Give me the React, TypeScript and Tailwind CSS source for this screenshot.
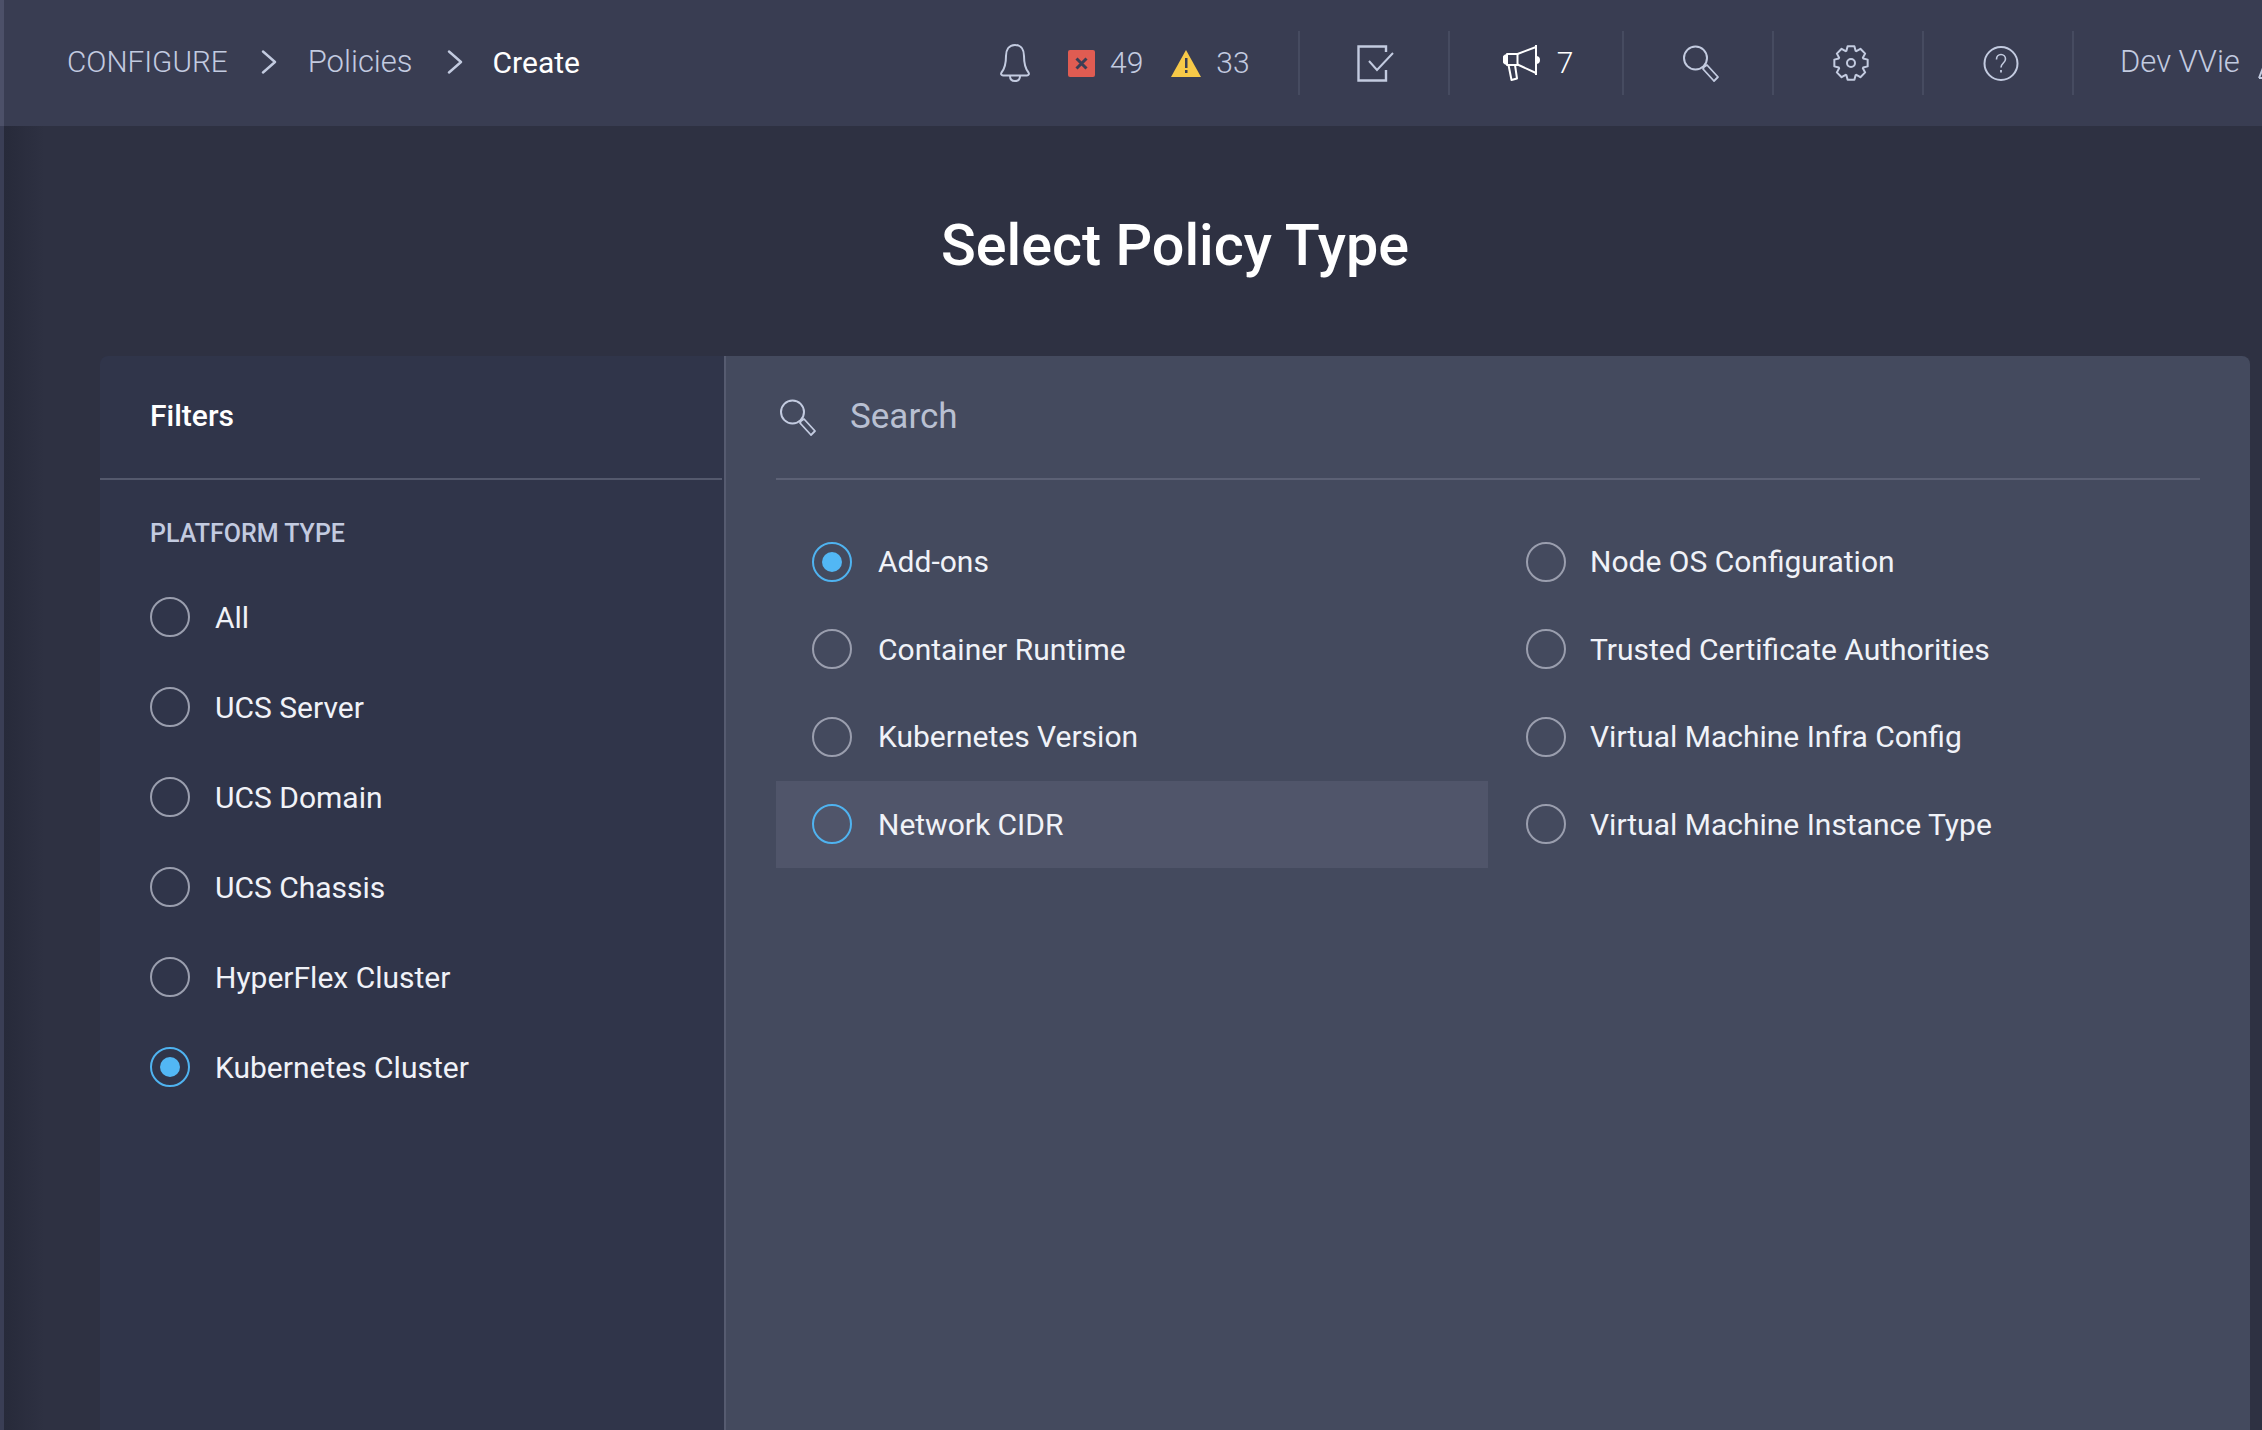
const platformTypes = ["All", "UCS Server", "UCS Domain", "UCS Chassis", "HyperFlex Cluster", "Kubernetes Cluster"];

const policyTypes = [
  "Add-ons",
  "Container Runtime",
  "Kubernetes Version",
  "Network CIDR",
  "Node OS Configuration",
  "Trusted Certificate Authorities",
  "Virtual Machine Infra Config",
  "Virtual Machine Instance Type",
];

const gearPath = (() => {
  const pts: string[] = [];
  for (let i = 0; i < 8; i++) {
    const a = (i * Math.PI) / 4 - Math.PI / 2;
    [
      [-0.36, 13],
      [-0.2, 17],
      [0.2, 17],
      [0.36, 13],
    ].forEach(([d, r]) => {
      pts.push(`${(18 + r * Math.cos(a + d)).toFixed(2)} ${(18 + r * Math.sin(a + d)).toFixed(2)}`);
    });
  }
  return `M${pts.join("L")}Z`;
})();

const Radio = ({ selected, active }: { selected?: boolean; active?: boolean }) => (
  <span
    className={`flex h-10 w-10 shrink-0 items-center justify-center rounded-full border-2 ${
      selected || active ? "border-[#4fb3f0]" : "border-[#9a9eae]"
    }`}
  >
    {selected && <span className="h-5 w-5 rounded-full bg-[#52b7f5]" />}
  </span>
);

const Chevron = () => (
  <svg width="16" height="24" viewBox="0 0 16 24" fill="none" stroke="#c3cbe0" strokeWidth="2.4" strokeLinecap="round" strokeLinejoin="round">
    <path d="M2 1.5 14 12 2 22.5" />
  </svg>
);

const SearchIcon = ({ color = "#c3cbe0" }: { color?: string }) => (
  <svg width="36" height="37" viewBox="0 0 36 37" fill="none" stroke={color} strokeWidth="2">
    <circle cx="12.5" cy="13" r="11.5" />
    <path d="M21 22 24 20 35 32 31 36 20 24Z" strokeWidth="1.8" strokeLinejoin="round" />
  </svg>
);

const HeaderCell = ({ width, children }: { width: string; children: React.ReactNode }) => (
  <div className={`flex h-16 shrink-0 items-center justify-center border-r-2 border-[#464b60] ${width}`}>{children}</div>
);

export default function App() {
  return (
    <div className="flex h-screen w-[2262px] flex-col overflow-hidden bg-[#2e3142] font-['Roboto',sans-serif]">
      <header className="flex h-[126px] shrink-0 items-center border-l-4 border-[#4c5068] bg-[#393d52] text-[30px]">
        <nav className="flex w-[996px] shrink-0 items-center pb-[2px] pl-[63px] font-light text-[#c3cbe0]">
          <span className="text-[29.700px]">CONFIGURE</span>
          <span className="ml-[33px] mr-[31px]"><Chevron /></span>
          <span className="text-[31px]">Policies</span>
          <span className="ml-[34px] mr-[30px]"><Chevron /></span>
          <span className="font-normal text-white">Create</span>
        </nav>

        <div className="flex h-16 w-[300px] shrink-0 items-center border-r-2 border-[#464b60] font-light text-[#c3cbe0]">
          <svg width="30" height="38" viewBox="0 0 30 38" fill="none" stroke="#c3cbe0" strokeWidth="2" strokeLinejoin="round">
            <path d="M15 1C8.5 1 6 6.5 6 12c0 9-1.5 13-4.500 16.500C0.500 30 1.500 31.500 3 31.500h24c1.500 0 2.500-1.500 1.500-3C25.500 25 24 21 24 12c0-5.500-2.500-11-9-11Z" />
            <path d="M10 32c0 3 2 5 5 5s5-2 5-5" />
          </svg>
          <span className="ml-[38px] flex h-[27px] w-[27px] items-center justify-center rounded-[2px] bg-[#e05c52]">
            <svg width="13" height="13" viewBox="0 0 13 13" stroke="#3a3e55" strokeWidth="3">
              <path d="M1.500 1.500 11.500 11.500M11.500 1.500 1.500 11.500" />
            </svg>
          </span>
          <span className="ml-[15px] pb-[2px]">49</span>
          <svg className="ml-[28px]" width="30" height="27" viewBox="0 0 30 27">
            <path d="M15 0 30 27H0Z" fill="#f7c948" />
            <path d="M14 8h2.500v10H14ZM14 20h2.500v3H14Z" fill="#3a3e55" />
          </svg>
          <span className="ml-[15px] pb-[2px]">33</span>
        </div>

        <HeaderCell width="w-[150px] pl-[2px]">
          <svg width="37" height="37" viewBox="0 0 37 37" fill="none" stroke="#c3cbe0" strokeWidth="2.400">
            <path d="M29 7V1.500H1.500v34H29V25" />
            <path d="M12 16 20 25 36 8" strokeWidth="2" />
          </svg>
        </HeaderCell>

        <HeaderCell width="w-[174px] pl-1">
          <svg width="37" height="37" viewBox="0 0 37 37" fill="none" stroke="#fff" strokeWidth="2" strokeLinejoin="round">
            <path d="M4 9h10.500v11H4Z" />
            <path d="M14.500 9 33 2M14.500 19.500 33 28" />
            <path d="M33 0v30" />
            <path d="M33 12c4 0 4 6 0 6" fill="#fff" />
            <path d="M4 10c-5 0-5 9 0 9" fill="#fff" />
            <path d="M5.500 20l3 15 5.500-1.500L12 20" />
          </svg>
          <span className="ml-[17px] pb-[2px] font-light text-white">7</span>
        </HeaderCell>

        <HeaderCell width="w-[150px] pl-[5px]">
          <SearchIcon />
        </HeaderCell>

        <HeaderCell width="w-[150px] pl-[5px]">
          <svg width="36" height="36" viewBox="0 0 36 36" fill="none" stroke="#c3cbe0" strokeWidth="2" strokeLinejoin="round">
            <path d={gearPath} />
            <circle cx="18" cy="18" r="4" />
          </svg>
        </HeaderCell>

        <HeaderCell width="w-[150px] pl-[5px]">
          <svg width="36" height="37" viewBox="0 0 36 37" fill="none" stroke="#c3cbe0" strokeWidth="2">
            <circle cx="18" cy="18.500" r="16.500" />
            <path d="M13.500 14.500c0-3 2-5 4.500-5s4.500 2 4.500 4.500c0 4-4.500 4-4.500 8.500" strokeWidth="1.600" />
            <path d="M18 25v2.500" strokeWidth="1.800" />
          </svg>
        </HeaderCell>

        <span className="ml-[46px] shrink-0 pb-[2px] text-[31px] font-light text-[#c3cbe0]">Dev VVie</span>
        <svg className="ml-[18px] mt-5 shrink-0" width="12" height="14" viewBox="0 0 12 14" fill="none" stroke="#c3cbe0" strokeWidth="2">
          <path d="M1 12 5 2h7" />
          <path d="M1 12h11" />
        </svg>
      </header>

      <main className="flex min-h-0 flex-1 flex-col border-l-4 border-[#3a3e55] bg-[linear-gradient(90deg,#272a3a,#2e3142_40px)] pl-24 pr-3">
        <div className="flex h-[230px] shrink-0 items-center justify-center pt-[11px] text-[57.500px] font-medium text-white">
          Select Policy Type
        </div>

        <section className="flex min-h-0 flex-1 overflow-hidden rounded-t-lg">
          <aside className="w-[626px] shrink-0 border-r-2 border-[#565b70] bg-[#30354a] pr-[2px]">
            <div className="flex h-[124px] items-center border-b-2 border-[#54596d] pb-[3px] pl-[50px] text-[30px] font-medium text-white">
              Filters
            </div>
            <div className="pl-[50px]">
              <div className="flex h-[92px] items-end pb-5 text-[25px] font-medium text-[#c3cbe0]">PLATFORM TYPE</div>
              {platformTypes.map((name, i) => (
                <div key={name} className="flex h-[90px] items-center gap-[25px] text-[30px] text-[#f0f2f8]">
                  <Radio selected={i === 5} />
                  {name}
                </div>
              ))}
            </div>
          </aside>

          <div className="min-w-0 flex-1 bg-[#444a5e] px-[50px]">
            <div className="flex h-[124px] items-center gap-[34px] border-b-2 border-[#5c6175] pl-1 text-[35px] text-[#b9c0d2]">
              <SearchIcon />
              <span>Search</span>
            </div>
            <div className="mt-[38px] grid grid-flow-col grid-cols-2 grid-rows-[repeat(4,87.5px)]">
              {policyTypes.map((name, i) => (
                <div
                  key={name}
                  className={`flex items-center text-[30px] text-[#f0f2f8] ${
                    i < 4 ? "gap-[26px] pl-9" : "gap-6 pl-[38px]"
                  } ${i === 3 ? "bg-[#50556a]" : ""}`}
                >
                  <Radio selected={i === 0} active={i === 3} />
                  {name}
                </div>
              ))}
            </div>
          </div>
        </section>
      </main>
    </div>
  );
}
